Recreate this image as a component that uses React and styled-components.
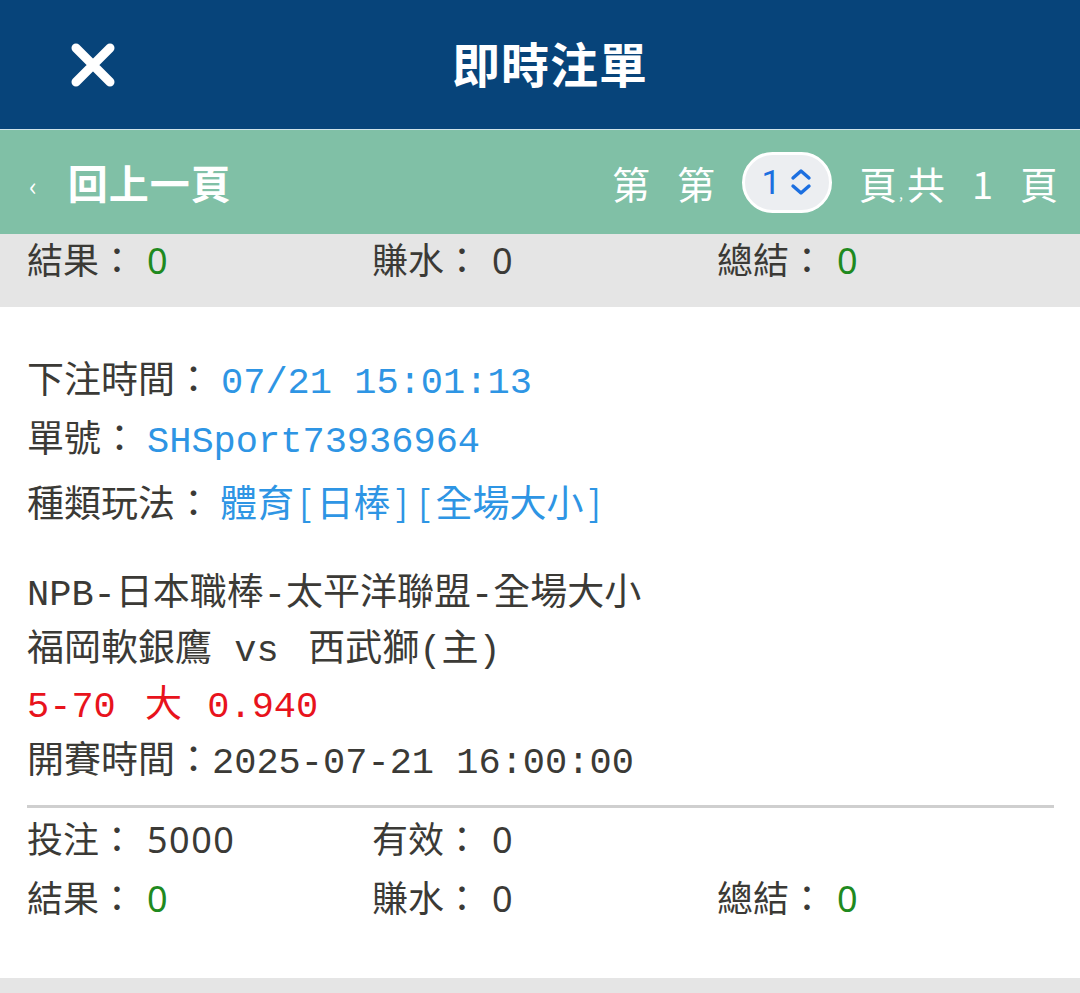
import React from 'react';
import styled, { createGlobalStyle } from 'styled-components';

const GlobalStyle = createGlobalStyle`
  html, body {
    margin: 0;
    padding: 0;
    background: #e5e5e5;
  }
  body {
    font-family: "Liberation Mono", "Noto Sans CJK TC", monospace;
    color: #3b3a36;
  }
`;

const Page = styled.div`
  width: 1080px;
  height: 993px;
  overflow: hidden;
  background: #e5e5e5;
`;

const Header = styled.header`
  height: 130px;
  background: #07447a;
  border-bottom: 1px solid #cfe3ea;
  display: grid;
  grid-template-columns: 1fr auto 1fr;
  align-items: center;
  padding: 0 0 0 20px;
  box-sizing: border-box;
`;

const CloseButton = styled.button`
  justify-self: start;
  margin-left: 50px;
  width: 46px;
  height: 46px;
  padding: 0;
  border: 0;
  background: none;
  display: flex;
  align-items: center;
  justify-content: center;
`;

const Title = styled.h1`
  margin: 0 0 6px;
  font-family: "Noto Sans CJK TC", sans-serif;
  font-size: 48px;
  font-weight: 700;
  color: #fff;
  letter-spacing: 1px;
`;

const SubBar = styled.nav`
  height: 104px;
  background: #80c0a6;
  display: flex;
  align-items: center;
  justify-content: space-between;
  padding: 0 22px 0 29px;
  font-family: "Noto Sans CJK TC", sans-serif;
  color: #fff;
`;

const BackLink = styled.a`
  display: flex;
  align-items: center;
  gap: 30px;
  font-size: 40px;
  font-weight: 700;
  color: #fff;
  letter-spacing: 1px;
`;

const Chevron = styled.span`
  font-size: 26px;
  font-weight: 400;
  margin-top: 4px;
`;

const Pager = styled.div`
  display: flex;
  align-items: center;
  font-size: 38px;
  gap: 27px;
`;

const PageWord = styled.span`
  display: flex;
  align-items: baseline;
`;

const Comma = styled.span`
  font-size: 14px;
  margin: 0 4px 0 2px;
`;

const PageSelect = styled.div`
  width: 84px;
  height: 55px;
  border: 3px solid #fff;
  border-radius: 32px;
  background: #eceef1;
  display: flex;
  align-items: center;
  justify-content: center;
  gap: 8px;
  color: #1c6fe0;
  font-family: Roboto, sans-serif;
  font-size: 34px;
`;

const Card = styled.section`
  background: #fff;
  padding: 47px 26px 52px 27px;
`;

const ScrolledCard = styled.section`
  background: #e5e5e5;
  padding: 0 27px 24px;
`;

const InfoBlock = styled.div`
  font-size: 37px;
`;

const GameBlock = styled.div`
  margin-top: 36px;
  font-size: 37px;
`;

const Line = styled.div`
  height: ${(p) => p.$h || 59}px;
  line-height: ${(p) => p.$h || 59}px;
  white-space: pre;
  color: ${(p) => p.$color || '#3b3a36'};
`;

const Value = styled.span`
  margin-left: ${(p) => p.$gap || 9}px;
  color: ${(p) => p.$color || '#3b3a36'};
`;

const Bracket = styled.span`
  font-family: "Noto Sans CJK TC", sans-serif;
  margin: 0 5px;
`;

const Big = styled.span`
  margin: 0 3px 0 7px;
`;

const Divider = styled.hr`
  margin: 14px 0 0;
  border: 0;
  border-top: 3px solid #cfcfcf;
`;

const StatGrid = styled.div`
  display: grid;
  grid-template-columns: 345px 345px 1fr;
  font-family: "Noto Sans CJK TC", sans-serif;
  font-size: 36px;
`;

const Stat = styled.div`
  height: ${(p) => p.$h || 59}px;
  line-height: ${(p) => p.$h || 59}px;
  white-space: pre;
`;

const StatNum = styled.span`
  margin-left: 12px;
  font-family: "Noto Sans", sans-serif;
  letter-spacing: 1.5px;
  color: ${(p) => (p.$green ? '#1f8a1f' : '#3b3a36')};
`;

function XIcon() {
  return (
    <svg width="46" height="46" viewBox="0 0 46 46">
      <path d="M6 6 L40 40 M40 6 L6 40" stroke="#fff" strokeWidth="9" strokeLinecap="round" />
    </svg>
  );
}

function UpDown() {
  return (
    <svg width="24" height="30" viewBox="0 0 24 30">
      <path d="M4 11 L12 4 L20 11 M4 19 L12 26 L20 19" stroke="#1c6fe0" strokeWidth="3.4" fill="none" strokeLinecap="round" strokeLinejoin="round" />
    </svg>
  );
}

function Results({ h }) {
  return (
    <StatGrid>
      <Stat $h={h}>結果：<StatNum $green>0</StatNum></Stat>
      <Stat $h={h}>賺水：<StatNum>0</StatNum></Stat>
      <Stat $h={h}>總結：<StatNum $green>0</StatNum></Stat>
    </StatGrid>
  );
}

export default function App() {
  const blue = '#2e95e4';
  return (
    <Page>
      <GlobalStyle />
      <Header>
        <CloseButton aria-label="close">
          <XIcon />
        </CloseButton>
        <Title>即時注單</Title>
        <div />
      </Header>
      <SubBar>
        <BackLink>
          <Chevron>‹</Chevron>
          回上一頁
        </BackLink>
        <Pager>
          <PageWord>第</PageWord>
          <PageWord>第</PageWord>
          <PageSelect>
            1
            <UpDown />
          </PageSelect>
          <PageWord>頁<Comma>,</Comma>共</PageWord>
          <PageWord>1</PageWord>
          <PageWord>頁</PageWord>
        </Pager>
      </SubBar>

      <ScrolledCard>
        <Results h={49} />
      </ScrolledCard>

      <Card>
        <InfoBlock>
          <Line>下注時間：<Value $color={blue}>07/21 15:01:13</Value></Line>
          <Line>單號：<Value $color={blue}>SHSport73936964</Value></Line>
          <Line>
            種類玩法：
            <Value $color={blue} $gap={8}>
              體育<Bracket>[</Bracket>日棒<Bracket>]</Bracket><Bracket>[</Bracket>全場大小<Bracket>]</Bracket>
            </Value>
          </Line>
        </InfoBlock>
        <GameBlock>
          <Line $h={56}>NPB-日本職棒-太平洋聯盟-全場大小</Line>
          <Line $h={56}>福岡軟銀鷹 vs {'\u2009'}西武獅(主)</Line>
          <Line $h={56} $color="#e8131c">5-70 <Big>大</Big> 0.940</Line>
          <Line $h={56}>開賽時間：2025-07-21 16:00:00</Line>
        </GameBlock>
        <Divider />
        <StatGrid>
          <Stat>投注：<StatNum>5000</StatNum></Stat>
          <Stat>有效：<StatNum>0</StatNum></Stat>
          <Stat />
        </StatGrid>
        <Results />
      </Card>
    </Page>
  );
}
